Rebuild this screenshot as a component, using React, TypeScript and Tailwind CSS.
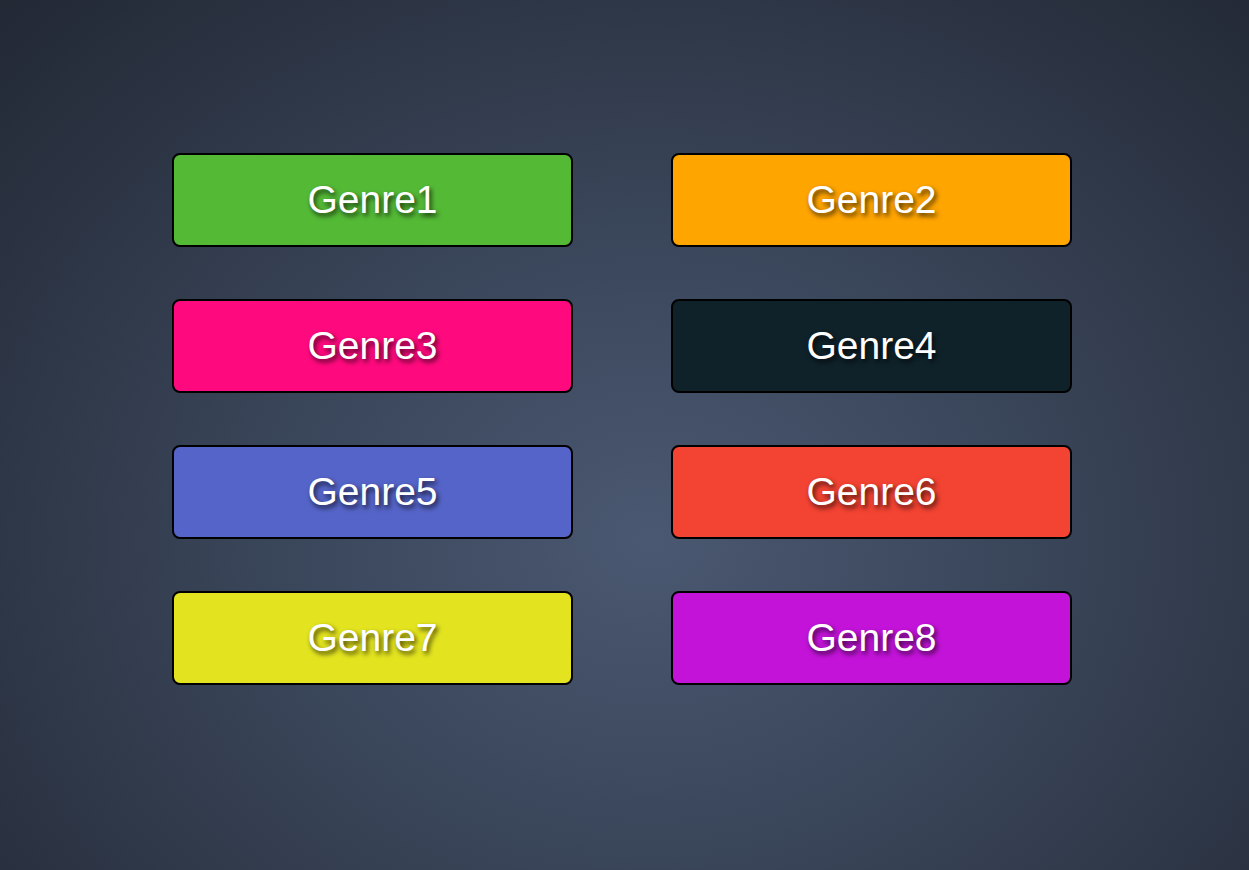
import React from "react";

const genres = [
  { name: "Genre1", bg: "bg-[#54ba36]" },
  { name: "Genre2", bg: "bg-[#ffa500]" },
  { name: "Genre3", bg: "bg-[#ff0a7e]" },
  { name: "Genre4", bg: "bg-[#0f222a]" },
  { name: "Genre5", bg: "bg-[#5564c8]" },
  { name: "Genre6", bg: "bg-[#f34332]" },
  { name: "Genre7", bg: "bg-[#e3e41f]" },
  { name: "Genre8", bg: "bg-[#c313d9]" },
];

export default function App() {
  return (
    <div
      className="w-full h-[870px] overflow-hidden bg-[radial-gradient(ellipse_at_52%_62%,#4a5871_0%,#3a465a_40%,#222834_100%)]"
      style={{ fontFamily: '"Liberation Sans", Arial, sans-serif' }}
    >
      <div className="pt-[153px] pl-[172px]">
        <div className="grid grid-cols-[401px_401px] gap-x-[98px] gap-y-[52px] w-max">
          {genres.map((g) => (
            <button
              key={g.name}
              className={`${g.bg} w-[401px] h-[94px] border-2 border-black rounded-[8px] flex items-center justify-center pb-[2px] text-white text-[39px] leading-none [text-shadow:2px_3px_5px_rgba(0,0,0,0.75)]`}
            >
              {g.name}
            </button>
          ))}
        </div>
      </div>
    </div>
  );
}
